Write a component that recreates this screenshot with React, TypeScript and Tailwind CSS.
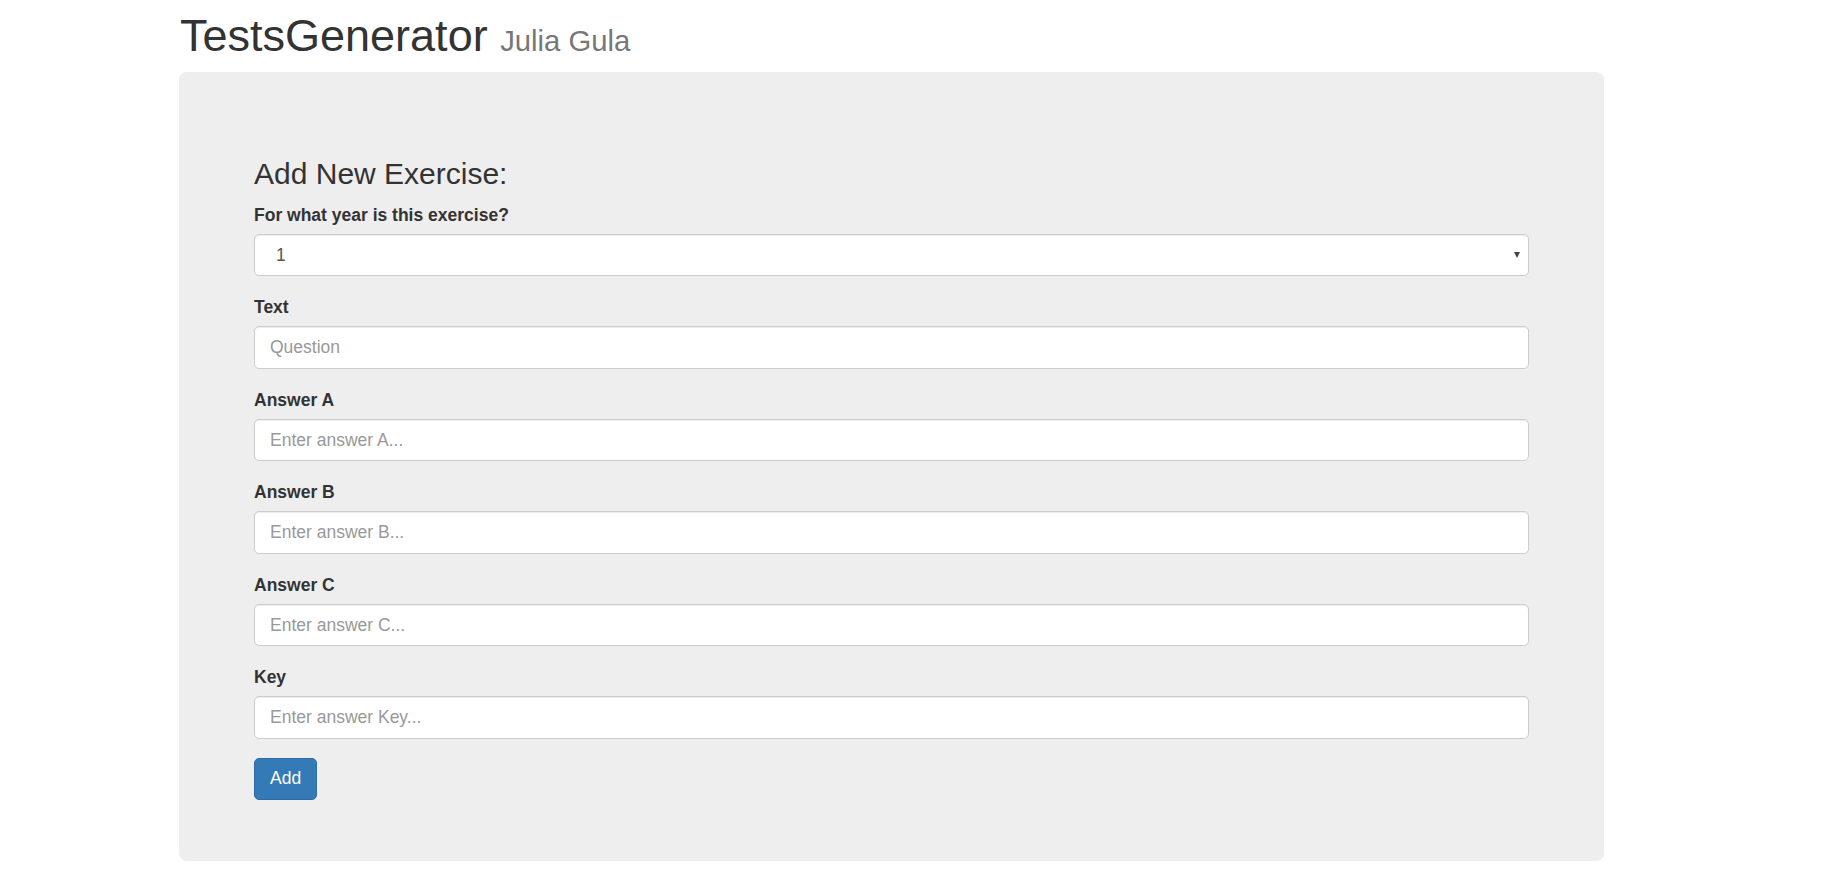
import { useState } from "react";

const fields = [
  { label: "Text", placeholder: "Question" },
  { label: "Answer A", placeholder: "Enter answer A..." },
  { label: "Answer B", placeholder: "Enter answer B..." },
  { label: "Answer C", placeholder: "Enter answer C..." },
  { label: "Key", placeholder: "Enter answer Key..." },
];

const inputCls =
  "block w-full h-[42.5px] px-[15px] py-[7.5px] text-[17.5px] leading-[25px] text-[#555] bg-white border border-[#ccc] rounded-[5px] shadow-[inset_0_1px_1px_rgba(0,0,0,0.075)] placeholder:text-[#999] outline-none";

export default function App() {
  const [year, setYear] = useState("1");

  return (
    <div className="min-h-screen bg-white text-[#333] font-['Liberation_Sans',Arial,sans-serif] text-[17.5px] leading-[25px]">
      {/* ── Header ──────────────────────────────── */}
      <h1 className="ml-[180px] pt-[10.5px] mb-[12px] text-[45px] leading-[49.5px] font-normal">
        TestsGenerator{" "}
        <small className="text-[29.25px] leading-none text-[#777]">Julia Gula</small>
      </h1>

      {/* ── Jumbotron ───────────────────────────── */}
      <div className="ml-[179px] w-[1425px] bg-[#eee] rounded-[7.5px] px-[75px] pt-[60px] pb-[60.5px]">
        <h3 className="mt-[25px] mb-[12.5px] text-[30px] leading-[33px] font-normal">
          Add New Exercise:
        </h3>

        <form onSubmit={(e) => e.preventDefault()}>
          <div className="mb-[18.75px]">
            <label className="inline-block mb-[6.25px] font-bold">For what year is this exercise?</label>
            <div className="relative">
              <select
                value={year}
                onChange={(e) => setYear(e.target.value)}
                className={`${inputCls} appearance-none pl-[21px]`}
              >
                <option>1</option>
                <option>2</option>
                <option>3</option>
              </select>
              <span className="pointer-events-none absolute right-[9px] top-[18px] w-0 h-0 border-l-[3.5px] border-r-[3.5px] border-t-[6px] border-l-transparent border-r-transparent border-t-[#444]" />
            </div>
          </div>

          {fields.map((f) => (
            <div key={f.label} className="mb-[18.75px]">
              <label className="inline-block mb-[6.25px] font-bold">{f.label}</label>
              <input type="text" placeholder={f.placeholder} className={inputCls} />
            </div>
          ))}

          <button
            type="submit"
            className="block h-[42.5px] px-[15px] py-[7.5px] text-[17.5px] leading-[25px] text-white bg-[#337ab7] border border-[#2e6da4] rounded-[5px]"
          >
            Add
          </button>
        </form>
      </div>
    </div>
  );
}
